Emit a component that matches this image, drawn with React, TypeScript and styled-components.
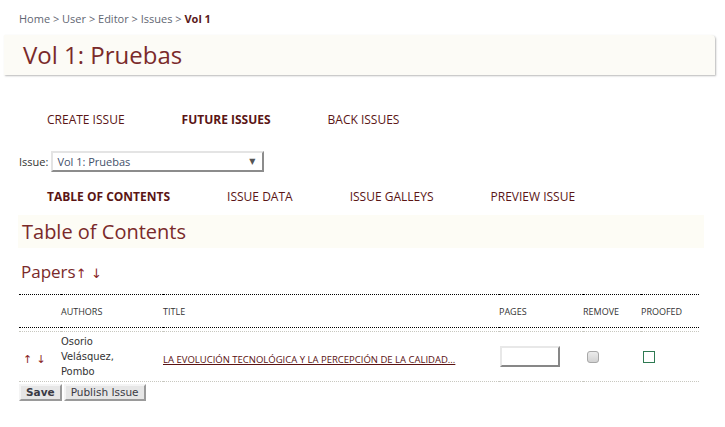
import styled, { createGlobalStyle } from "styled-components";

const GlobalStyle = createGlobalStyle`
  body {
    margin: 0;
    background: #fff;
    font-family: "Open Sans", sans-serif;
    color: #333;
  }
`;

const Page = styled.div`
  width: 725px;
  padding-top: 11px;
`;

const Breadcrumb = styled.div`
  padding-left: 19px;
  font-size: 11px;
  line-height: 15px;
  color: #5f6672;

  b {
    color: #5a1a1a;
    font-weight: 700;
  }
`;

const TitleBar = styled.div`
  margin: 9px 0 0 4px;
  width: 711px;
  height: 40px;
  background: #fcfbf6;
  border-top-right-radius: 4px;
  box-shadow: 1px 1px 2px rgba(0, 0, 0, 0.28);
`;

const PageTitle = styled.h1`
  margin: 0;
  padding-left: 19px;
  font-size: 24px;
  font-weight: 400;
  line-height: 40px;
  color: #7a2a2a;
`;

const Menu = styled.ul<{ $top: number }>`
  display: flex;
  gap: 57px;
  list-style: none;
  margin: ${(p) => p.$top}px 0 0;
  padding: 0 0 0 47px;
  font-size: 12px;
  line-height: 16px;
  text-transform: uppercase;
`;

const MenuItem = styled.li<{ $current?: boolean }>`
  color: #5a1515;
  font-weight: ${(p) => (p.$current ? 700 : 400)};
`;

const IssueRow = styled.div`
  display: flex;
  align-items: center;
  gap: 3px;
  margin-top: 23px;
  padding-left: 19px;
  font-size: 11px;
  color: #333;
`;

const SelectBox = styled.div`
  display: flex;
  align-items: center;
  justify-content: space-between;
  box-sizing: border-box;
  width: 213px;
  height: 21px;
  padding: 0 7px 0 4px;
  background: #fff;
  border: 2px solid #e4e4e4;
  border-right-color: #8c8c8c;
  border-bottom-color: #8c8c8c;
  font-size: 11px;
  color: #44506a;
`;

const SelectArrow = styled.span`
  font-family: "DejaVu Sans", sans-serif;
  font-size: 8px;
  color: #555;
`;

const SectionBar = styled.div`
  margin: 10px 0 0 18px;
  width: 686px;
  height: 33px;
  background: #fdfcf5;
`;

const SectionTitle = styled.h2`
  margin: 0;
  padding-left: 4px;
  font-size: 20px;
  font-weight: 400;
  line-height: 33px;
  color: #7a2a2a;
`;

const PapersTitle = styled.h3`
  margin: 12px 0 0;
  padding-left: 21px;
  height: 24px;
  font-size: 17px;
  font-weight: 400;
  line-height: 24px;
  color: #7a2a2a;
`;

const SortArrow = styled.span<{ $size?: number }>`
  font-family: "DejaVu Sans", sans-serif;
  font-size: ${(p) => p.$size ?? 13}px;
  line-height: 1;
  color: #8a2525;
`;

const Table = styled.table`
  margin: 10px 0 0 19px;
  width: 680px;
  border-collapse: collapse;
  table-layout: fixed;
  border-top: 1px dotted #000;
`;

const HeadCell = styled.th<{ $w: number }>`
  width: ${(p) => p.$w}px;
  height: 32px;
  padding: 0;
  text-align: left;
  vertical-align: middle;
  font-size: 9px;
  font-weight: 400;
  text-transform: uppercase;
  color: #333;
  border-bottom: 1px dotted #000;
`;

const Spacer = styled.td`
  height: 3px;
  padding: 0;
  font-size: 0;
  line-height: 0;
  border-bottom: 1px dotted #c8c8c0;
`;

const Cell = styled.td<{ $pad?: number }>`
  height: 49px;
  padding: 0 0 0 ${(p) => p.$pad ?? 0}px;
  vertical-align: middle;
  border-bottom: 1px dotted #c8c8c0;
`;

const Authors = styled.div`
  padding-right: 36px;
  font-family: "DejaVu Sans", sans-serif;
  font-stretch: condensed;
  font-size: 11px;
  line-height: 15px;
  color: #333;
`;

const TitleLink = styled.a`
  font-size: 9.5px;
  text-transform: uppercase;
  color: #5a1212;
  text-decoration: underline;
  white-space: nowrap;
`;

const PagesInput = styled.input`
  display: block;
  box-sizing: border-box;
  width: 60px;
  height: 21px;
  margin: 0;
  background: #fff;
  border: 2px solid #e8e8e8;
  border-right-color: #878787;
  border-bottom-color: #878787;
`;

const RemoveBox = styled.input`
  appearance: none;
  display: block;
  width: 12px;
  height: 12px;
  margin: 0;
  border: 1px solid #a8a8a8;
  border-radius: 3px;
  background: linear-gradient(#ececec, #d2d2d2);
`;

const ProofedBox = styled.span`
  display: block;
  box-sizing: border-box;
  width: 12px;
  height: 12px;
  border: 1.5px solid #2e7a52;
`;

const Actions = styled.div`
  display: flex;
  gap: 2px;
  margin: 2px 0 0 19px;
`;

const Button = styled.button<{ $primary?: boolean }>`
  height: 17px;
  margin: 0;
  padding: 0 5px;
  background: #e6e6e6;
  border: 2px solid #f4f4f4;
  border-right-color: #9a9a9a;
  border-bottom-color: #9a9a9a;
  font-family: "DejaVu Sans", sans-serif;
  font-size: 10.5px;
  line-height: 13px;
  font-weight: ${(p) => (p.$primary ? 700 : 400)};
  color: #3a3a44;
`;

export default function App() {
  return (
    <Page>
      <GlobalStyle />
      <Breadcrumb>
        Home &gt; User &gt; Editor &gt; Issues &gt; <b>Vol 1</b>
      </Breadcrumb>

      <TitleBar>
        <PageTitle>Vol 1: Pruebas</PageTitle>
      </TitleBar>

      <Menu $top={37}>
        <MenuItem>Create Issue</MenuItem>
        <MenuItem $current>Future Issues</MenuItem>
        <MenuItem>Back Issues</MenuItem>
      </Menu>

      <IssueRow>
        Issue:
        <SelectBox>
          Vol 1: Pruebas
          <SelectArrow>▼</SelectArrow>
        </SelectBox>
      </IssueRow>

      <Menu $top={17}>
        <MenuItem $current>Table of Contents</MenuItem>
        <MenuItem>Issue Data</MenuItem>
        <MenuItem>Issue Galleys</MenuItem>
        <MenuItem>Preview Issue</MenuItem>
      </Menu>

      <SectionBar>
        <SectionTitle>Table of Contents</SectionTitle>
      </SectionBar>

      <PapersTitle>
        Papers<SortArrow>↑</SortArrow> <SortArrow>↓</SortArrow>
      </PapersTitle>

      <Table>
        <thead>
          <tr>
            <HeadCell $w={42} />
            <HeadCell $w={102}>Authors</HeadCell>
            <HeadCell $w={336}>Title</HeadCell>
            <HeadCell $w={84}>Pages</HeadCell>
            <HeadCell $w={58}>Remove</HeadCell>
            <HeadCell $w={58}>Proofed</HeadCell>
          </tr>
        </thead>
        <tbody>
          <tr>
            <Spacer colSpan={6} />
          </tr>
          <tr>
            <Cell $pad={4}>
              <SortArrow $size={11}>↑</SortArrow>{" "}
              <SortArrow $size={11}>↓</SortArrow>
            </Cell>
            <Cell>
              <Authors>Osorio Velásquez, Pombo</Authors>
            </Cell>
            <Cell>
              <TitleLink href="#">
                La evolución tecnológica y la percepción de la calidad...
              </TitleLink>
            </Cell>
            <Cell $pad={1}>
              <PagesInput type="text" />
            </Cell>
            <Cell $pad={4}>
              <RemoveBox type="checkbox" />
            </Cell>
            <Cell $pad={2}>
              <ProofedBox />
            </Cell>
          </tr>
        </tbody>
      </Table>

      <Actions>
        <Button $primary>Save</Button>
        <Button>Publish Issue</Button>
      </Actions>
    </Page>
  );
}
